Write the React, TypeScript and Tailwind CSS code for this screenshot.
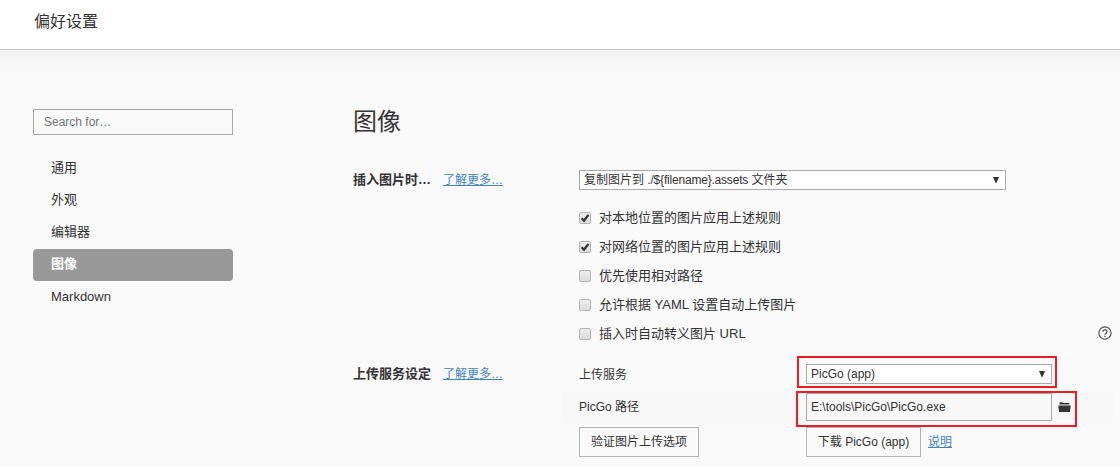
import { useState } from 'react';
import type { ReactNode } from 'react';

const menuItems = ['通用', '外观', '编辑器', '图像', 'Markdown'];

const imageRules = [
  { label: '对本地位置的图片应用上述规则', checked: true },
  { label: '对网络位置的图片应用上述规则', checked: true },
  { label: '优先使用相对路径', checked: false },
  { label: '允许根据 YAML 设置自动上传图片', checked: false },
  { label: '插入时自动转义图片 URL', checked: false },
];

function TextLink({ children }: { children: ReactNode }) {
  return (
    <a href="#" className="text-[12px] font-normal text-[#4183c4] underline underline-offset-1 whitespace-nowrap">
      {children}
    </a>
  );
}

function SelectBox({ children }: { children: ReactNode }) {
  return (
    <button className="flex h-5 w-full items-center justify-between border border-[#a9a9a9] bg-white pl-1 pr-[6px] text-[12px] leading-[18px]">
      <span>{children}</span>
      <svg className="mb-px h-[6px] w-[6px]" viewBox="0 0 6 6">
        <path d="M0 0h6L3.4 6h-.8z" fill="#333" />
      </svg>
    </button>
  );
}

function CheckRow({ label, checked, onToggle }: { label: string; checked: boolean; onToggle: () => void }) {
  return (
    <button onClick={onToggle} className="flex h-[29px] items-center gap-2 text-[13px]">
      <span className="flex h-3 w-3 items-center justify-center rounded-[2px] border border-[#b4b4b4] bg-gradient-to-b from-[#ededed] to-[#dcdcdc]">
        {checked && (
          <svg className="h-[10px] w-[10px] shrink-0" viewBox="0 0 10 10" fill="none">
            <path d="M1.6 5.3L4 7.7L8.4 1.8" stroke="#333" strokeWidth="2.2" />
          </svg>
        )}
      </span>
      <span>{label}</span>
    </button>
  );
}

export default function App() {
  const [active, setActive] = useState('图像');
  const [rules, setRules] = useState(imageRules);

  const toggleRule = (index: number) => {
    setRules(rules.map((rule, i) => (i === index ? { ...rule, checked: !rule.checked } : rule)));
  };

  return (
    <div className="h-[467px] w-[1120px] overflow-hidden bg-[#fafafa] font-['Liberation_Sans','Noto_Sans_CJK_SC',sans-serif] text-[13px] text-[#333]">
      <header className="flex h-[50px] items-center border-b border-[#ccc] bg-white pl-[34px] pb-[6px] text-[16px]">
        偏好设置
      </header>
      <div className="h-5 bg-gradient-to-b from-[#f3f3f3] to-[#fafafa]" />

      <div className="flex">
        {/* Sidebar */}
        <aside className="ml-[33px] mt-[39px] w-[200px] shrink-0">
          <input
            type="text"
            placeholder="Search for…"
            className="block h-[26px] w-full border border-[#a9a9a9] bg-[#fafafa] px-[10px] text-[12px] placeholder:text-[#757575]"
          />
          <nav className="mt-[18px]">
            {menuItems.map((item) => (
              <button
                key={item}
                onClick={() => setActive(item)}
                className={`flex h-8 w-full items-center rounded pl-[18px] pb-[2px] last:pb-px ${
                  item === active ? 'bg-[#999] font-bold text-white' : ''
                }`}
              >
                {item}
              </button>
            ))}
          </nav>
        </aside>

        <main className="ml-[120px] mt-[34px] w-[767px]">
          <h1 className="h-9 text-[24px] leading-9">图像</h1>

          {/* Image insertion */}
          <section className="mt-[30px] flex h-[179px]">
            <div className="flex h-5 w-[226px] shrink-0 items-center gap-3">
              <span className="font-bold">插入图片时…</span>
              <TextLink>了解更多…</TextLink>
            </div>
            <div className="grow">
              <div className="w-[427px]">
                <SelectBox>
                  复制图片到 <span className="tracking-[-0.2px]">{'./${filename}.assets'}</span> 文件夹
                </SelectBox>
              </div>
              <div className="mt-[13px]">
                {rules.map((rule, i) => (
                  <div key={rule.label} className="flex items-center justify-between">
                    <CheckRow label={rule.label} checked={rule.checked} onToggle={() => toggleRule(i)} />
                    {i === rules.length - 1 && (
                      <svg className="mr-2 mb-px h-[14px] w-[14px]" viewBox="0 0 14 14" fill="none" stroke="#555">
                        <circle cx="7" cy="7" r="6.1" strokeWidth="1.2" />
                        <path d="M5 5.7a2 2 0 1 1 3.1 1.6c-.7.5-1.1.8-1.1 1.5" strokeWidth="1.3" />
                        <path d="M7 9.7v1.3" strokeWidth="1.4" />
                      </svg>
                    )}
                  </div>
                ))}
              </div>
            </div>
          </section>

          {/* Upload service */}
          <section className="mt-[10px] flex">
            <div className="mt-[5px] flex h-5 w-[210px] shrink-0 items-center gap-3">
              <span className="font-bold">上传服务设定</span>
              <TextLink>了解更多…</TextLink>
            </div>
            <div className="w-[550px] shrink-0 text-[12px]">
              <div className="relative flex h-8 items-center pl-4">
                <span className="w-[227px]">上传服务</span>
                <div className="mb-[2px] w-[246px]">
                  <SelectBox>PicGo (app)</SelectBox>
                </div>
                <div className="pointer-events-none absolute -top-[3px] left-[234px] h-8 w-[260px] border-2 border-[#ed1c24]" />
              </div>
              <div className="relative flex h-8 items-center bg-[#f8f8f8] pl-4">
                <span className="w-[227px]">PicGo 路径</span>
                <input
                  readOnly
                  value="E:\tools\PicGo\PicGo.exe"
                  className="h-7 w-[246px] border border-[#a9a9a9] bg-[#f8f8f8] px-1"
                />
                <svg className="ml-[6px] h-[11px] w-[13px]" viewBox="0 0 13 11" fill="#333">
                  <path d="M1.5 2.6V.8L2 .3h2.4l.7.8h6.2v1.5z" />
                  <path d="M.3 3.4h12.4L12 10H1z" />
                </svg>
                <div className="pointer-events-none absolute top-0 left-[233px] h-9 w-[281px] border-2 border-[#ed1c24]" />
              </div>
              <div className="mt-1 flex items-center pl-4">
                <button className="mr-[107px] h-[30px] w-[120px] border border-[#b4b4b4]">验证图片上传选项</button>
                <button className="mr-[7px] h-[30px] w-[115px] border border-[#b4b4b4]">下载 PicGo (app)</button>
                <TextLink>说明</TextLink>
              </div>
            </div>
          </section>
        </main>
      </div>
    </div>
  );
}
